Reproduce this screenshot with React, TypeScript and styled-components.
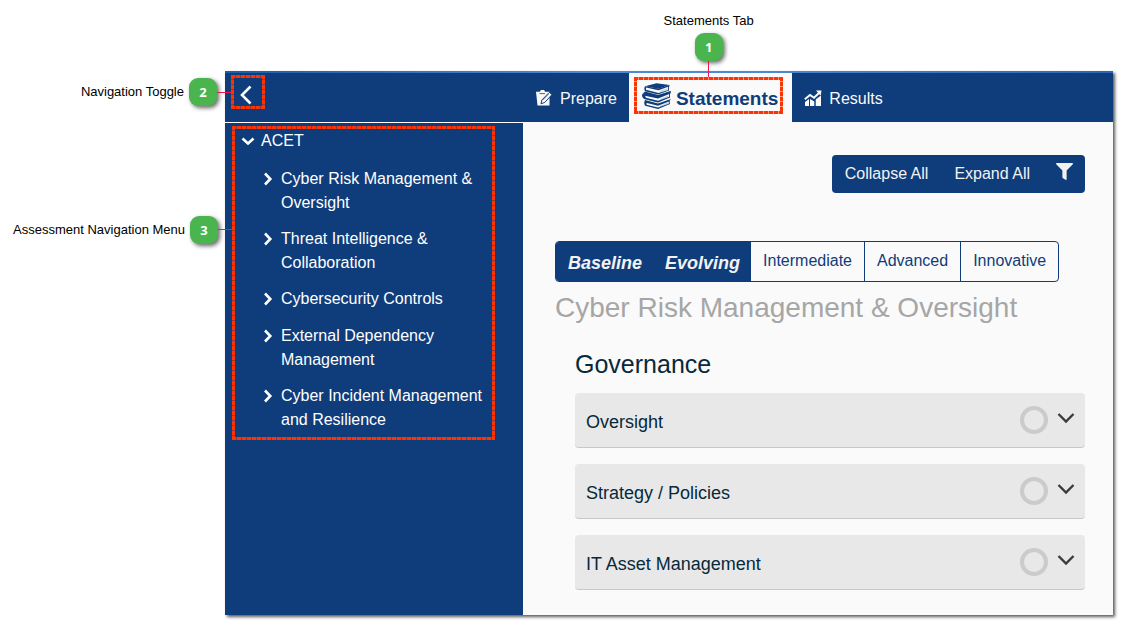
import React from 'react';
import styled, { createGlobalStyle, css } from 'styled-components';
import { FaFilter } from 'react-icons/fa';

const navy = '#0f3c7b';
const paper = '#fafafa';
const ink = '#07293b';
const sidebarWidth = '298px';

const GlobalStyle = createGlobalStyle`
  *, *::before, *::after { box-sizing: border-box; }
  body { margin: 0; background: #fff; font-family: "Liberation Sans", Arial, sans-serif; font-size: 16px; line-height: 24px; }
  button { font: inherit; color: inherit; background: none; border: 0; padding: 0; cursor: pointer; text-align: left; }
  h1, h2, ul { margin: 0; padding: 0; font-weight: 400; }
  ul { list-style: none; }
  svg { display: block; flex: none; }
`;

const Page = styled.div`
  padding: 71px 9px 9px 225px;
`;

const Window = styled.div`
  background: ${paper};
  box-shadow: 2px 2px 3px rgba(0, 0, 0, 0.65);
`;

const Accent = styled.div`
  height: 2px;
  background: linear-gradient(90deg, #1f5ca6, #4a8ad6 40%, #4a8ad6 60%, #2c67b2);
`;

const Header = styled.header`
  display: grid;
  grid-template-columns: ${sidebarWidth} 1fr;
  height: 49px;
  background: ${navy};
  color: ${paper};
`;

const HeaderLeft = styled.div`
  padding: 2px 6px;
`;

const dash = '#ff3300 0 4px, rgba(255, 51, 0, 0.5) 4px 5px';
const highlight = css`
  position: relative;
  &::after {
    content: '';
    position: absolute;
    inset: 0;
    pointer-events: none;
    background:
      repeating-linear-gradient(90deg, ${dash}) top / 100% 3px no-repeat,
      repeating-linear-gradient(90deg, ${dash}) bottom / 100% 3px no-repeat,
      repeating-linear-gradient(180deg, ${dash}) left / 3px 100% no-repeat,
      repeating-linear-gradient(180deg, ${dash}) right / 3px 100% no-repeat;
  }
`;

const ToggleFrame = styled.div`
  ${highlight}
  width: 34px;
  height: 34px;
`;

const ToggleButton = styled.button`
  display: grid;
  place-items: center;
  width: 30px;
  height: 40px;
`;

const Tabs = styled.nav`
  display: flex;
  padding-left: 1px;
`;

const Tab = styled.button`
  display: flex;
  align-items: center;
  gap: 7px;
  padding: 2px 12px 0;
`;

const ActiveTab = styled.div`
  padding: 4px 9px 8px 5px;
  background: ${paper};
  color: ${navy};
`;

const TabFrame = styled.div`
  ${highlight}
  height: 37px;
`;

const ActiveTabButton = styled.button`
  display: flex;
  align-items: center;
  gap: 4px;
  height: 37px;
  padding: 0 5px 0 8px;
  font-size: 19px;
  font-weight: 700;
  span { padding-top: 7px; }
`;

const Callout = styled.div<{ $side: 'top' | 'left'; $at: string }>`
  position: absolute;
  z-index: 1;
  display: flex;
  align-items: center;
  color: #000;
  font-size: 13px;
  line-height: 16px;
  white-space: nowrap;
  ${({ $side, $at }) =>
    $side === 'top'
      ? `flex-direction: column; gap: 4px; bottom: 100%; left: ${$at}; transform: translateX(-50%);`
      : `gap: 5px; right: 100%; top: ${$at}; transform: translateY(-50%);`}
`;

const Pin = styled.span<{ $side: 'top' | 'left' }>`
  display: flex;
  align-items: center;
  flex-direction: ${({ $side }) => ($side === 'top' ? 'column' : 'row')};
  &::after {
    content: '';
    background: #f0134d;
    width: ${({ $side }) => ($side === 'top' ? '1px' : '14px')};
    height: ${({ $side }) => ($side === 'top' ? '16px' : '1px')};
  }
`;

const Badge = styled.b`
  display: grid;
  place-items: center;
  width: 28px;
  height: 28px;
  border-radius: 9px;
  background: #4ab54e;
  color: #fff;
  font: 700 13px/16px "Open Sans", sans-serif;
  box-shadow: 2px 2px 4px rgba(0, 0, 0, 0.6);
`;

const Body = styled.div`
  display: grid;
  grid-template-columns: ${sidebarWidth} 1fr;
`;

const Sidebar = styled.aside`
  border-top: 1px solid #fff;
  padding: 3px 28px 3px 7px;
  background: ${navy};
  color: #fff;
`;

const TreeFrame = styled.nav`
  ${highlight}
  padding: 3px 8px 8px;
`;

const TreeItem = styled.button`
  display: flex;
  align-items: flex-start;
  gap: 5px;
  width: 100%;
  min-height: 25px;
  svg { margin-top: 4px; }
`;

const Branch = styled.ul`
  display: flex;
  flex-direction: column;
  gap: 12px;
  padding: 13px 0 0 20px;
`;

const Main = styled.main`
  padding: 33px 28px 25px 32px;
`;

const Toolbar = styled.div`
  display: flex;
  width: fit-content;
  height: 38px;
  margin-left: auto;
  border-radius: 4px;
  background: ${navy};
  color: #f2f2f2;
`;

const ToolButton = styled.button`
  padding: 0 13px;
`;

const FilterButton = styled(ToolButton)`
  padding: 0 12px 6px 13px;
`;

const Levels = styled.div`
  display: flex;
  width: fit-content;
  height: 41px;
  margin-top: 48px;
  border: 1px solid ${navy};
  border-radius: 4px;
  overflow: hidden;
`;

const Level = styled.button<{ $on?: boolean }>`
  padding: 0 12px 2px;
  color: ${navy};
  & + & { border-left: 1px solid ${navy}; }
  ${({ $on }) =>
    $on && css`
      padding: 2px 10px 0 12px;
      background: ${navy};
      color: #f2f2f2;
      font-size: 18px;
      font-style: italic;
      font-weight: 700;
    `}
`;

const DomainTitle = styled.h1`
  margin-top: 9px;
  color: #a6a6a6;
  font-size: 28px;
  line-height: 34px;
`;

const Section = styled.section`
  padding-left: 20px;
`;

const SectionTitle = styled.h2`
  margin-top: 24px;
  color: ${ink};
  font-size: 25px;
  line-height: 30px;
`;

const Cards = styled.div`
  display: flex;
  flex-direction: column;
  gap: 16px;
  margin-top: 14px;
`;

const Card = styled.button`
  display: flex;
  align-items: center;
  gap: 9px;
  height: 55px;
  padding: 0 10px 0 11px;
  border-bottom: 1px solid #c8c8c8;
  border-radius: 4px;
  background: #e8e8e8;
  color: ${ink};
  font-size: 18px;
`;

const CardName = styled.span`
  flex: 1;
  padding-top: 3px;
`;

const Ring = styled.span`
  width: 28px;
  height: 28px;
  border: 4px solid #cbcbcb;
  border-radius: 50%;
`;

const CardChevron = styled.svg`
  margin-bottom: 5px;
`;

const PrepareIcon = () => (
  <svg width="17" height="18" viewBox="0 0 17 18" fill="currentColor" aria-hidden="true">
    <path d="M0 1.800h4L4.800 0h3.400L9 1.800h4.500V15.500H1.500z" />
    <path d="M3.500 3.600h5.500" stroke={navy} strokeWidth=".8" />
    <path d="M13.300 2.300l2.700 2.300-7.200 7.800-3.800 1.400.9-3.800z" stroke={navy} strokeWidth="1" />
    <path d="M7.200 10l5.600-6" stroke={navy} strokeWidth=".5" />
  </svg>
);

const ResultsIcon = () => (
  <svg width="18" height="18" viewBox="0 0 18 18" fill="currentColor" aria-hidden="true">
    <path d="M1 12l4-3v7H1zM6 9l4.500 2.500V16H6zM11.500 9.500L17 5.500V16h-5.500z" />
    <path d="M.8 9.200L6 5l4 2.800L15 3" fill="none" stroke="currentColor" strokeWidth="2" />
    <path d="M12 .6l5.500-.2-.8 5.300z" />
    <path d="M5.500 8v8M11 9v7" stroke={navy} strokeWidth=".9" />
  </svg>
);

const BooksIcon = () => (
  <svg width="30" height="26" viewBox="0 0 30 26" aria-hidden="true">
    <g fill="currentColor">
      <path d="M3 3.200L14.500.3 27.500 2 16.500 5.800z" />
      <path d="M3 3.200C2 5 2.200 7 3.200 8.200L16 11.500 27 7.500V6.700L16.500 10 4 6.800V4.500L16.500 7.200 27.500 3.200V2L16.500 5.600z" />
      <path d="M0 11.500L3 8.500 16 12 29 8 26.500 10.500 15.500 14.800z" />
      <path d="M0 11.500C-.2 14 1 15.500 3 16.300L16 19.500 28 14.500V13.600L16 17.800 4 14.800 3 12.800 16 15.500 28.500 10.500 29 8 16 12.500z" />
      <path d="M3 17L16 20.500 29 16 27 18.500 16 22.800 3 19.500z" />
      <path d="M3 17C1.800 19.500 2.200 21.500 3.200 22.800L16 25.900 28 21V20.200L16 24.500 4.500 21.700V19z" />
    </g>
    <path d="M26.500 3v4M27.500 10v4.500M27.300 17.500V21" stroke="currentColor" strokeWidth=".9" />
    <path d="M18 8.300l7.500-2.500M18 16.300l8-3M18 23.300l8-3" stroke="currentColor" strokeWidth=".5" opacity=".5" />
  </svg>
);

const TreeChevron = ({ open }: { open?: boolean }) => (
  <svg width="16" height="16" viewBox="0 0 16 16" fill="none" stroke="currentColor" strokeWidth="2.600" aria-hidden="true">
    <path d={open ? 'M2.500 5.500L8 10.500l5.500-5' : 'M5 2.500L10.300 8l-5.300 5.500'} />
  </svg>
);

type NoteProps = { side: 'top' | 'left'; at?: string; number: number; text: string };

const Note = ({ side, at = '50%', number, text }: NoteProps) => (
  <Callout $side={side} $at={at}>
    <span>{text}</span>
    <Pin $side={side}>
      <Badge>{number}</Badge>
    </Pin>
  </Callout>
);

const domains = [
  'Cyber Risk Management & Oversight',
  'Threat Intelligence & Collaboration',
  'Cybersecurity Controls',
  'External Dependency Management',
  'Cyber Incident Management and Resilience',
];

const levels = [
  { name: 'Baseline', on: true },
  { name: 'Evolving', on: true },
  { name: 'Intermediate', on: false },
  { name: 'Advanced', on: false },
  { name: 'Innovative', on: false },
];

const topics = ['Oversight', 'Strategy / Policies', 'IT Asset Management'];

export default function App() {
  return (
    <Page>
      <GlobalStyle />
      <Window>
        <Accent />
        <Header>
          <HeaderLeft>
            <ToggleFrame>
              <ToggleButton aria-label="Toggle navigation">
                <svg width="12" height="20" viewBox="0 0 12 20" fill="none" stroke="currentColor" strokeWidth="2.600" aria-hidden="true">
                  <path d="M10.500 1.500L2 10l8.500 8.500" />
                </svg>
              </ToggleButton>
              <Note side="left" number={2} text="Navigation Toggle" />
            </ToggleFrame>
          </HeaderLeft>
          <Tabs>
            <Tab>
              <PrepareIcon />
              Prepare
            </Tab>
            <ActiveTab>
              <TabFrame>
                <ActiveTabButton aria-current="page">
                  <BooksIcon />
                  <span>Statements</span>
                </ActiveTabButton>
                <Note side="top" number={1} text="Statements Tab" />
              </TabFrame>
            </ActiveTab>
            <Tab>
              <ResultsIcon />
              Results
            </Tab>
          </Tabs>
        </Header>
        <Body>
          <Sidebar>
            <TreeFrame>
              <TreeItem aria-expanded="true">
                <TreeChevron open />
                ACET
              </TreeItem>
              <Branch>
                {domains.map((name) => (
                  <li key={name}>
                    <TreeItem aria-expanded="false">
                      <TreeChevron />
                      {name}
                    </TreeItem>
                  </li>
                ))}
              </Branch>
              <Note side="left" at="33%" number={3} text="Assessment Navigation Menu" />
            </TreeFrame>
          </Sidebar>
          <Main>
            <Toolbar>
              <ToolButton>Collapse All</ToolButton>
              <ToolButton>Expand All</ToolButton>
              <FilterButton aria-label="Filter">
                <FaFilter size={17} />
              </FilterButton>
            </Toolbar>
            <Levels>
              {levels.map(({ name, on }) => (
                <Level key={name} $on={on} aria-pressed={on}>
                  {name}
                </Level>
              ))}
            </Levels>
            <DomainTitle>Cyber Risk Management &amp; Oversight</DomainTitle>
            <Section>
              <SectionTitle>Governance</SectionTitle>
              <Cards>
                {topics.map((name) => (
                  <Card key={name} aria-expanded="false">
                    <CardName>{name}</CardName>
                    <Ring />
                    <CardChevron width="18" height="12" viewBox="0 0 18 12" fill="none" stroke="#3b3b3b" strokeWidth="2.400" aria-hidden="true">
                      <path d="M1.500 2L9 9.500 16.500 2" />
                    </CardChevron>
                  </Card>
                ))}
              </Cards>
            </Section>
          </Main>
        </Body>
      </Window>
    </Page>
  );
}
